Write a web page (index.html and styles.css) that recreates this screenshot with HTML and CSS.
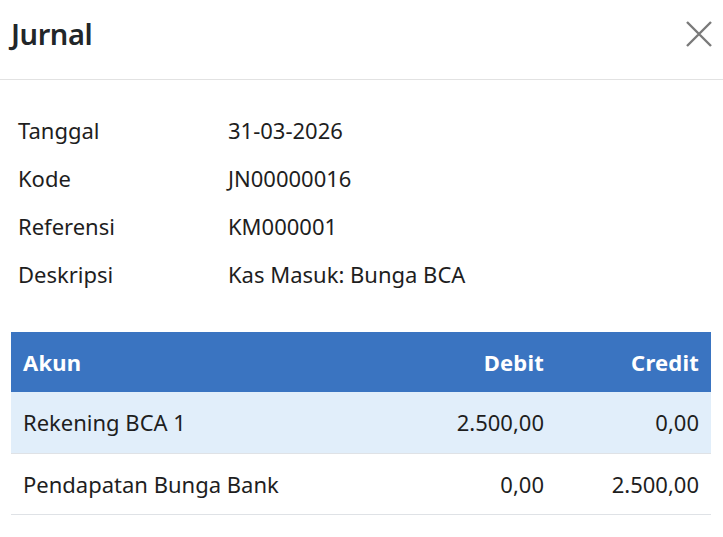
FILE: index.html
```html
<!DOCTYPE html>
<html lang="id">
<head>
<meta charset="utf-8">
<title>Jurnal</title>
<link rel="stylesheet" href="styles.css">
</head>
<body>
<div class="modal">
  <div class="modal-header">
    <h1 class="title">Jurnal</h1>
    <button class="close" aria-label="Close">
      <svg width="26" height="26" viewBox="0 0 26 26"><path d="M1 1L25 25M25 1L1 25" stroke="#7a7a7a" stroke-width="2.4" fill="none"/></svg>
    </button>
  </div>
  <div class="modal-body">
    <dl class="info">
      <div class="info-row"><dt>Tanggal</dt><dd>31-03-2026</dd></div>
      <div class="info-row"><dt>Kode</dt><dd>JN00000016</dd></div>
      <div class="info-row"><dt>Referensi</dt><dd>KM000001</dd></div>
      <div class="info-row"><dt>Deskripsi</dt><dd>Kas Masuk: Bunga BCA</dd></div>
    </dl>
    <table class="entries">
      <thead>
        <tr><th class="col-akun">Akun</th><th class="num">Debit</th><th class="num col-credit">Credit</th></tr>
      </thead>
      <tbody>
        <tr class="alt"><td>Rekening BCA 1</td><td class="num">2.500,00</td><td class="num">0,00</td></tr>
        <tr><td>Pendapatan Bunga Bank</td><td class="num">0,00</td><td class="num">2.500,00</td></tr>
      </tbody>
    </table>
  </div>
</div>
</body>
</html>
```
FILE: styles.css
```css
* { box-sizing: border-box; }
html, body { margin: 0; padding: 0; background: #fff; }
body {
  font-family: "Noto Sans", "Open Sans", sans-serif;
  color: #1e1e1e;
  width: 723px;
  height: 537px;
  overflow: hidden;
}
.modal-header {
  height: 80px;
  border-bottom: 1px solid #e2e2e2;
  display: flex;
  align-items: center;
  justify-content: space-between;
  padding: 0 11px 12px 11px;
}
.title {
  margin: 0;
  font-size: 29px;
  font-weight: 600;
  color: #222629;
  letter-spacing: -0.4px;
}
.close {
  border: 0;
  background: none;
  padding: 0;
  display: flex;
  cursor: pointer;
}
.modal-body {
  padding: 26px 11px 0 11px;
}
.info { margin: 0 0 0 7px; }
.info-row {
  display: flex;
  height: 48px;
  align-items: center;
  font-size: 22px;
}
.info-row dt { width: 210px; }
.info-row dd { margin: 0; }
.entries {
  margin-top: 34px;
  width: 700px;
  border-collapse: collapse;
  font-size: 22px;
}
.entries th {
  background: #3a74c1;
  color: #fff;
  font-weight: 700;
  height: 60px;
  padding: 0 12px;
  text-align: left;
  letter-spacing: 0.2px;
}
.entries td {
  height: 61px;
  padding: 0 12px;
  border-bottom: 1px solid #dfe2e6;
}
.entries .num { text-align: right; }
.entries .col-credit { width: 155px; }
.entries tr.alt td { background: #e1eefa; }
```
